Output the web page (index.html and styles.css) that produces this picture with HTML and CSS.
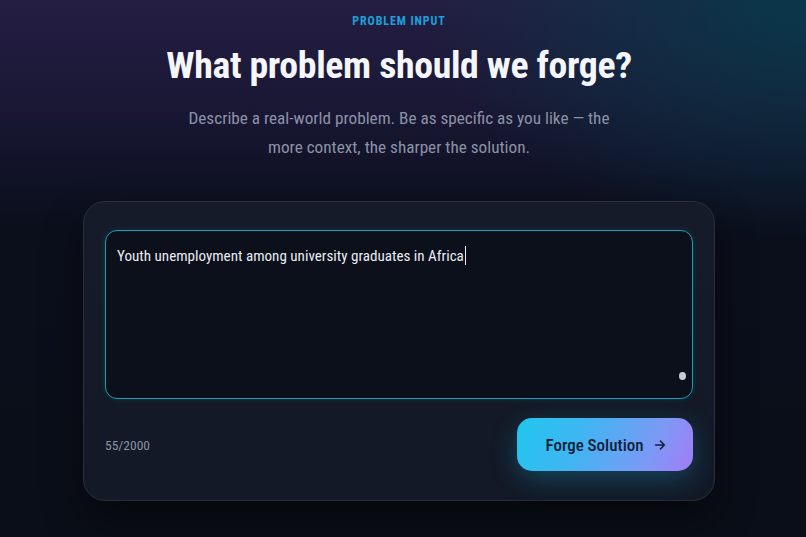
FILE: index.html
```html
<!DOCTYPE html>
<html lang="en">
<head>
<meta charset="utf-8">
<title>Problem Input</title>
<link rel="stylesheet" href="styles.css">
</head>
<body>
<main class="page">
  <header class="intro">
    <div class="eyebrow">PROBLEM INPUT</div>
    <h1 class="title">What problem should we forge?</h1>
    <p class="lead">Describe a real-world problem. Be as specific as you like — the more context, the sharper the solution.</p>
  </header>
  <section class="card">
    <div class="field">
      <span class="field-text">Youth unemployment among university graduates in Africa</span><span class="caret"></span>
      <span class="handle"></span>
    </div>
    <div class="footer">
      <span class="counter">55/2000</span>
      <button class="forge">Forge Solution
        <svg class="arrow" viewBox="0 0 16 16" width="14" height="14" aria-hidden="true"><path d="M3 8h10M8.5 3.5 13 8l-4.5 4.5" fill="none" stroke="currentColor" stroke-width="1.8" stroke-linecap="round" stroke-linejoin="round"/></svg>
      </button>
    </div>
  </section>
</main>
</body>
</html>
```
FILE: styles.css
```css
html, body { height: 100%; }
body {
  margin: 0;
  min-height: 537px;
  font-family: "Roboto Condensed", "Roboto", "Liberation Sans", sans-serif;
  color: #f3f5fb;
  background:
    radial-gradient(ellipse 380px 240px at 100% 0%, rgba(4, 60, 74, 0.85), rgba(4, 56, 70, 0) 100%),
    linear-gradient(180deg, #241e43 0%, #1b1836 18%, #121329 30%, #0b0f1c 42%, #0a0e18 100%);
  overflow: hidden;
}
.page {
  width: 632px;
  margin-left: 83px;
  display: flex;
  flex-direction: column;
}
.intro {
  display: flex;
  flex-direction: column;
  align-items: center;
  text-align: center;
}
.eyebrow {
  margin-top: 14px;
  font-size: 12px;
  line-height: 14px;
  font-weight: 700;
  letter-spacing: 0.9px;
  color: #1e9fd8;
}
.title {
  margin: 14px 0 0;
  font-size: 37.8px;
  line-height: 46px;
  font-weight: 700;
  letter-spacing: -0.35px;
  color: #f4f6fc;
}
.lead {
  margin: 16px 0 0;
  width: 442px;
  font-size: 17.2px;
  line-height: 29px;
  color: #8c92a6;
}
.card {
  margin-top: 39px;
  height: 300px;
  box-sizing: border-box;
  padding: 28px 21px 29px;
  border-radius: 22px;
  border: 1px solid #282f3d;
  background: linear-gradient(180deg, #151b28 0%, #131926 100%);
  box-shadow: 0 18px 40px rgba(0, 0, 0, 0.45);
  display: flex;
  flex-direction: column;
}
.field {
  position: relative;
  height: 170px;
  box-sizing: border-box;
  padding: 14px 11px;
  border: 1.5px solid #1b9dbb;
  border-radius: 12px;
  background: #0b101b;
  box-shadow: 0 0 6px rgba(27, 157, 187, 0.18);
  font-size: 15.1px;
  line-height: 22px;
  color: #e9ecf3;
}
.caret {
  display: inline-block;
  width: 1px;
  height: 19px;
  margin-left: 1px;
  vertical-align: -4px;
  background: #e9ecf3;
}
.handle {
  position: absolute;
  right: 6px;
  bottom: 18px;
  width: 7px;
  height: 8px;
  border-radius: 50%;
  background: #c9ccd2;
}
.footer {
  margin-top: 19px;
  display: flex;
  align-items: center;
  justify-content: space-between;
}
.counter {
  font-size: 13.5px;
  color: #8a92a3;
}
.forge {
  width: 176px;
  height: 53px;
  border: 0;
  border-radius: 15px;
  background: linear-gradient(115deg, #1fc6ee 0%, #3fb6f1 35%, #7c99f5 75%, #a47cf8 100%);
  box-shadow: 0 8px 26px rgba(30, 170, 220, 0.3);
  display: flex;
  align-items: center;
  justify-content: center;
  gap: 9px;
  font-family: inherit;
  font-size: 17px;
  font-weight: 500;
  color: #14203a;
  padding: 0 0 0 2px;
}
.arrow { display: block; }
```
